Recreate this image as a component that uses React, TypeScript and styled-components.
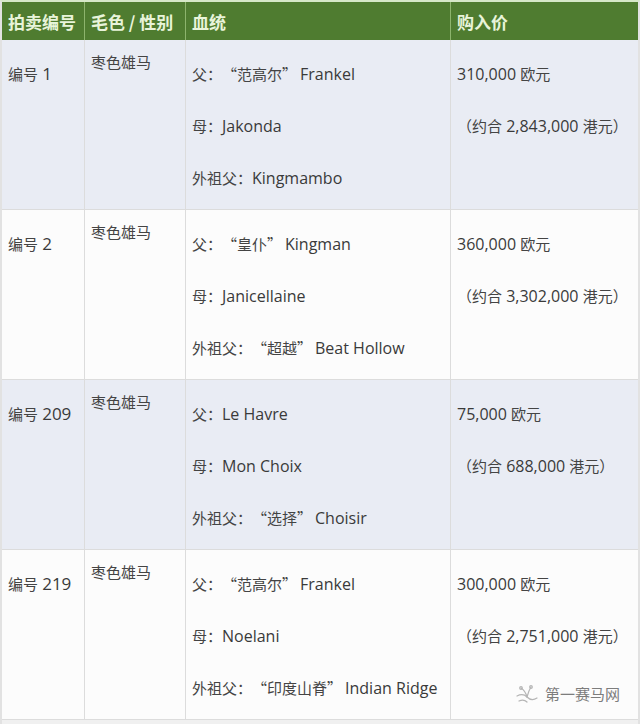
import styled, { createGlobalStyle } from 'styled-components';

const GlobalStyle = createGlobalStyle`
  html, body {
    margin: 0;
    padding: 0;
    background: #f0f0f0;
  }
`;

const Table = styled.div`
  width: 640px;
  height: 724px;
  box-sizing: border-box;
  border-left: 2px solid #e2e2e2;
  border-right: 2px solid #e2e2e2;
  border-top: 2px solid #d6e8c8;
  background: #f0f0f0;
  font-family: 'Open Sans', 'Noto Sans CJK SC', sans-serif;
  color: #3a3a3a;
  position: relative;
`;

const Row = styled.div<{ $tint?: boolean }>`
  display: grid;
  grid-template-columns: 82px 101px 265px 1fr;
  height: 170px;
  background: ${(p) => (p.$tint ? '#e9ecf4' : '#fcfcfc')};
  border-bottom: 1px solid #dcdcdc;
  box-sizing: border-box;
`;

const HeadRow = styled.div`
  display: grid;
  grid-template-columns: 82px 101px 265px 1fr;
  height: 38px;
  background: #4f7c30;
`;

const HeadCell = styled.div`
  padding: 0 6px;
  display: flex;
  align-items: center;
  font-family: 'Noto Sans CJK SC', sans-serif;
  font-weight: 700;
  font-size: 17px;
  color: #e8f4da;
  & + & {
    border-left: 1px solid #8db46d;
  }
`;

const Cell = styled.div<{ $lh?: number }>`
  padding: 8px 6px 0;
  line-height: ${(p) => p.$lh ?? 52}px;
  font-size: 16px;
  & + & {
    border-left: 1px solid #dcdcdc;
  }
`;

const Line = styled.div`
  white-space: nowrap;
`;

const Zh = styled.span`
  font-family: 'Noto Sans CJK SC', sans-serif;
  font-size: 15px;
  color: #444;
`;

const Quote = styled.span<{ $open?: boolean }>`
  display: inline-block;
  width: ${(p) => (p.$open ? 15 : 18)}px;
  text-align: ${(p) => (p.$open ? 'right' : 'left')};
  font-family: 'Noto Sans CJK SC', sans-serif;
  font-size: 15px;
  color: #444;
`;

const Num = styled.span`
  font-size: 17px;
`;

const Mark = styled.div`
  position: absolute;
  right: 18px;
  bottom: 20px;
  display: flex;
  align-items: center;
  gap: 6px;
  font-family: 'Noto Sans CJK SC', sans-serif;
  font-size: 15px;
  color: #7d7d7d;
`;

type Horse = {
  lot: string;
  sire: [string, string];
  dam: string;
  damsire: [string, string];
  eur: string;
  hkd: string;
};

const horses: Horse[] = [
  { lot: '1', sire: ['范高尔', 'Frankel'], dam: 'Jakonda', damsire: ['', 'Kingmambo'], eur: '310,000', hkd: '2,843,000' },
  { lot: '2', sire: ['皇仆', 'Kingman'], dam: 'Janicellaine', damsire: ['超越', 'Beat Hollow'], eur: '360,000', hkd: '3,302,000' },
  { lot: '209', sire: ['', 'Le Havre'], dam: 'Mon Choix', damsire: ['选择', 'Choisir'], eur: '75,000', hkd: '688,000' },
  { lot: '219', sire: ['范高尔', 'Frankel'], dam: 'Noelani', damsire: ['印度山脊', 'Indian Ridge'], eur: '300,000', hkd: '2,751,000' },
];

const Named = ({ zh, en }: { zh: string; en: string }) => (
  <>
    {zh && (
      <>
        <Quote $open>“</Quote>
        <Zh>{zh}</Zh>
        <Quote>”</Quote>
      </>
    )}
    {en}
  </>
);

const Logo = () => (
  <svg width="24" height="20" viewBox="0 0 24 20" fill="none" stroke="#b5b5b5" strokeWidth="1.2" strokeLinecap="round">
    <path d="M2 12 C6 10 9 10 12 13 C15 16 19 16 22 14" />
    <path d="M6 4 C9 6 11 9 12 13" />
    <path d="M16 3 C14 6 13 9 12 13" />
    <circle cx="6" cy="4" r="1.3" />
    <circle cx="16" cy="3" r="1.3" />
    <path d="M4 17 C8 15 10 16 12 18" />
  </svg>
);

const App = () => {
  return (
    <>
      <GlobalStyle />
      <Table>
        <HeadRow>
          <HeadCell>拍卖编号</HeadCell>
          <HeadCell>毛色 / 性别</HeadCell>
          <HeadCell>血统</HeadCell>
          <HeadCell>购入价</HeadCell>
        </HeadRow>
        {horses.map((h, i) => (
          <Row key={h.lot} $tint={i % 2 === 0}>
            <Cell>
              <Zh>编号</Zh> <Num>{h.lot}</Num>
            </Cell>
            <Cell $lh={28}>
              <Zh>枣色雄马</Zh>
            </Cell>
            <Cell>
              <Line>
                <Zh>父：</Zh>
                <Named zh={h.sire[0]} en={h.sire[1]} />
              </Line>
              <Line>
                <Zh>母：</Zh>
                {h.dam}
              </Line>
              <Line>
                <Zh>外祖父：</Zh>
                <Named zh={h.damsire[0]} en={h.damsire[1]} />
              </Line>
            </Cell>
            <Cell>
              <Line>
                {h.eur} <Zh>欧元</Zh>
              </Line>
              <Line>
                <Zh>（约合</Zh> {h.hkd} <Zh>港元）</Zh>
              </Line>
            </Cell>
          </Row>
        ))}
        <Mark>
          <Logo />
          第一赛马网
        </Mark>
      </Table>
    </>
  );
};

export default App;
